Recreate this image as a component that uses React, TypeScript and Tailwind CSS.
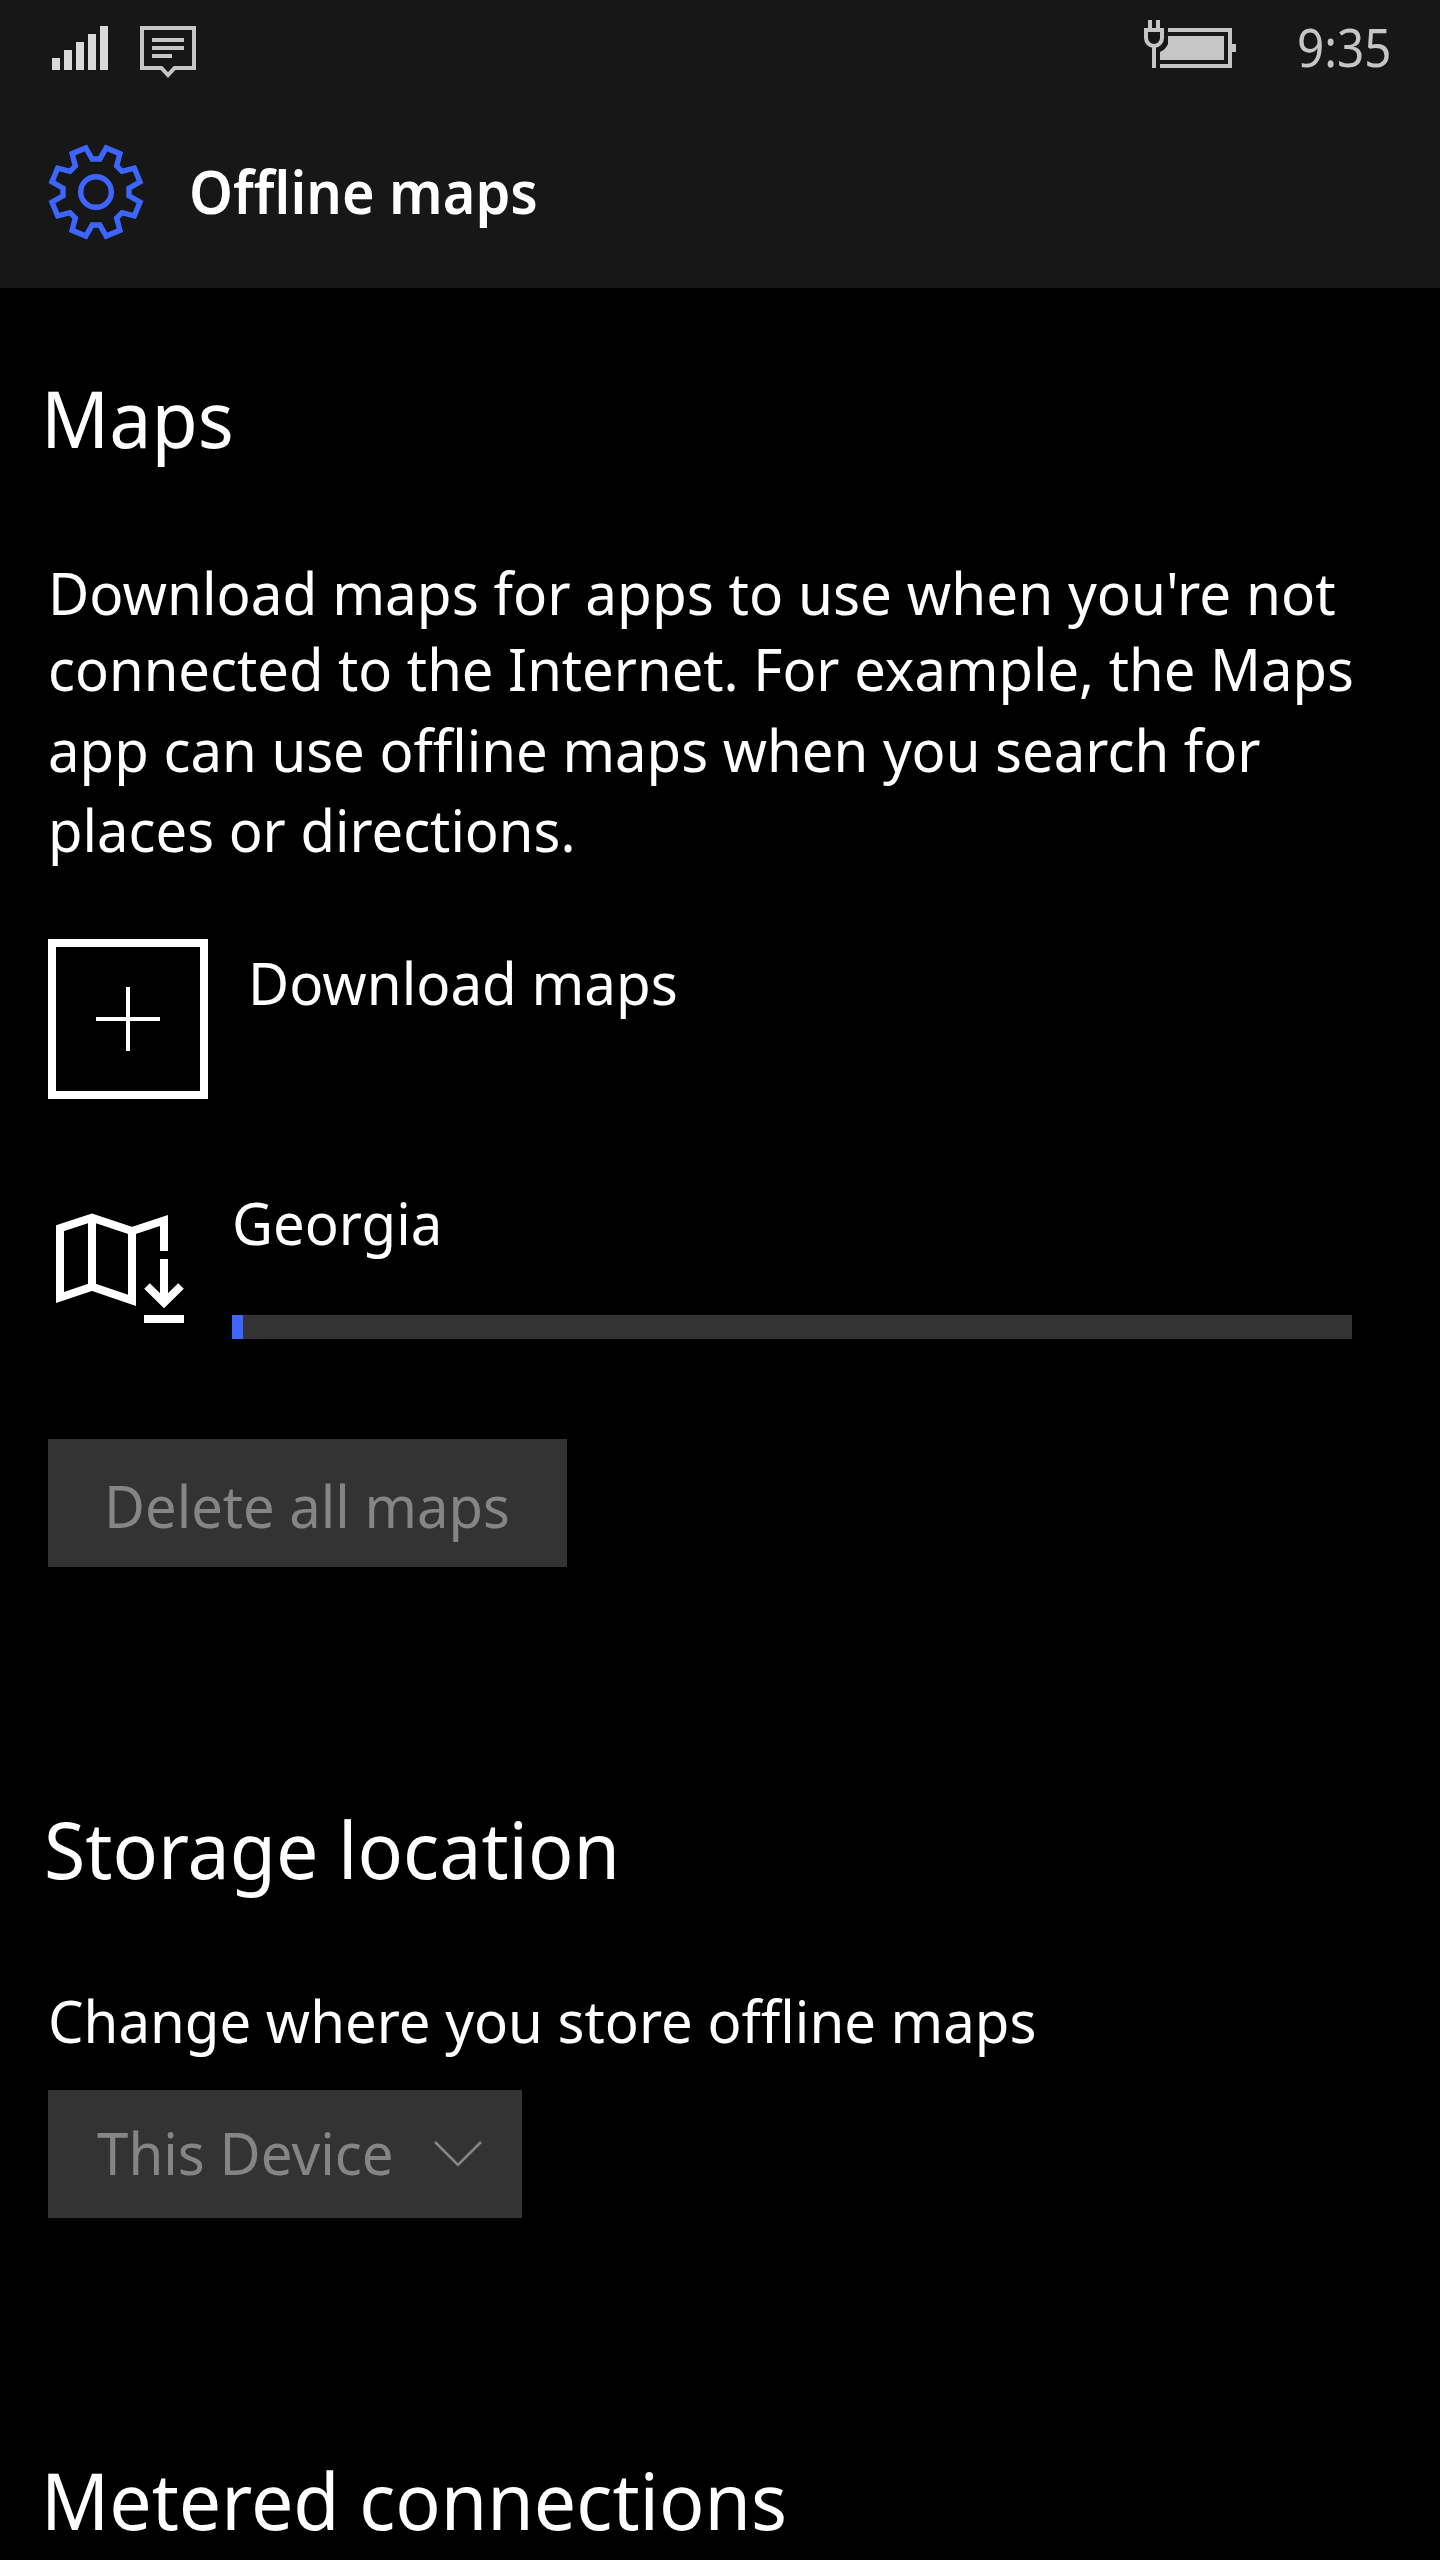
import type { ReactNode } from 'react';

function Line({
  children,
  className = '',
  scale = 'scale-x-[0.958]',
}: {
  children: ReactNode;
  className?: string;
  scale?: string;
}) {
  return (
    <div className={`w-max origin-left text-[58.8px] leading-[80px] whitespace-nowrap ${scale} ${className}`}>
      {children}
    </div>
  );
}

function Heading({ children, className = '' }: { children: ReactNode; className?: string }) {
  return (
    <h2 className={`w-max origin-left scale-x-[0.96] text-[78.4px] leading-[100px] font-normal whitespace-nowrap ${className}`}>
      {children}
    </h2>
  );
}

function SignalIcon() {
  return (
    <svg width="56" height="44" viewBox="0 0 56 44" fill="#dadada" shapeRendering="crispEdges">
      <path d="M0 32h8v12H0zM12 24h8v20h-8zM24 16h8v28h-8zM36 8h8v36h-8zM48 0h8v44h-8z" />
    </svg>
  );
}

function MessageIcon() {
  return (
    <svg className="ml-8" width="56" height="52" viewBox="0 0 56 52" fill="none" stroke="#c6c6c6" strokeWidth="4">
      <path d="M2 2H54V42H34.6L28 49L21.4 42H2Z" />
      <path d="M12 14H44M12 22H44M12 30H32" />
    </svg>
  );
}

function BatteryIcon() {
  return (
    <svg width="92" height="48" viewBox="0 0 92 48" fill="none" stroke="#c6c6c6" strokeWidth="4">
      <path d="M6 0V9M14 0V9M2 10H18V18A8 8 0 0 1 2 18ZM10 26V48" />
      <path d="M24 10H86V46H16" />
      <path d="M88 24H92V32H88ZM24 16H80V40H16V32Q22 29 24 24Z" fill="#c6c6c6" stroke="none" />
    </svg>
  );
}

const gearPoints = Array.from({ length: 8 }, (_, k) => {
  const a = (k * Math.PI) / 4;
  return [
    [-10.2, -44],
    [-3.8, -33],
    [3.8, -33],
    [10.2, -44],
  ]
    .map(([x, y]) => `${(x * Math.cos(a) - y * Math.sin(a)).toFixed(2)},${(x * Math.sin(a) + y * Math.cos(a)).toFixed(2)}`)
    .join(' ');
}).join(' ');

function GearIcon() {
  return (
    <svg width="96" height="96" viewBox="-48 -48 96 96" overflow="visible" fill="none" stroke="#3e65ff" strokeWidth="5.4">
      <polygon points={gearPoints} />
      <circle r="15.3" />
    </svg>
  );
}

function MapDownloadIcon() {
  return (
    <svg className="mt-[31px] shrink-0" width="128" height="110" viewBox="0 0 128 110" fill="none" stroke="#fff" strokeWidth="8">
      <path d="M108 38V7.5L76 18L36 4.6L4 15.2V84.5L36 73.8L76 87.4V18M36 4.6V73.8" />
      <path d="M108 46V88M91 73L108 89.7L125 73M88 106H128" />
    </svg>
  );
}

export default function App() {
  return (
    <div className="h-[2560px] w-[1440px] overflow-hidden bg-black font-['Noto_Sans','Open_Sans',sans-serif] text-white">
      <header className="h-[288px] bg-[#171717]">
        <div className="flex h-24 items-start justify-between pr-[42px] pl-[52px]">
          <div className="flex pt-[26px]">
            <SignalIcon />
            <MessageIcon />
          </div>
          <div className="flex">
            <div className="pt-5">
              <BatteryIcon />
            </div>
            <div className="mt-[7px] ml-[61px] w-[101px] origin-left scale-x-[0.915] text-[52px] leading-[80px] whitespace-nowrap text-[#c6c6c6]">
              9:35
            </div>
          </div>
        </div>
        <div className="flex pl-12">
          <div className="mt-12">
            <GearIcon />
          </div>
          <h1 className="mt-[55px] ml-[45px] w-max origin-left scale-x-[0.95] text-[58.8px] leading-[80px] font-semibold whitespace-nowrap">
            Offline maps
          </h1>
        </div>
      </header>

      <main className="px-12 pt-20">
        <section>
          <Heading className="-ml-[7px]">Maps</Heading>
          <div className="mt-[84px]">
            <Line className="h-[76px]" scale="scale-x-[0.963]">Download maps for apps to use when you're not</Line>
            <Line className="h-[81px]" scale="scale-x-[0.955]">connected to the Internet. For example, the Maps</Line>
            <Line className="h-20" scale="scale-x-[0.957]">app can use offline maps when you search for</Line>
            <Line className="h-20" scale="scale-x-[0.955]">places or directions.</Line>
          </div>

          <div className="mt-[70px] flex h-40">
            <button className="flex size-40 items-center justify-center border-8 border-white">
              <svg width="64" height="64" viewBox="0 0 64 64" stroke="#fff" strokeWidth="4">
                <path d="M0 32H64M32 0V64" />
              </svg>
            </button>
            <Line className="mt-[3px] ml-10" scale="scale-x-[0.961]">Download maps</Line>
          </div>

          <div className="mt-[83px] flex h-[157px] pl-2">
            <MapDownloadIcon />
            <div className="ml-12 flex w-[1120px] flex-col justify-between">
              <Line>Georgia</Line>
              <div className="h-6 bg-[#333333]">
                <div className="h-6 w-[11px] bg-[#3e65ff]" />
              </div>
            </div>
          </div>

          <button className="mt-[100px] block h-32 w-[519px] bg-[#333333] pl-14 text-left text-[#858585]">
            <Line className="mt-1" scale="scale-x-[0.955]">Delete all maps</Line>
          </button>
        </section>

        <section className="mt-[232px]">
          <Heading className="-ml-1">Storage location</Heading>
          <Line className="mt-[81px]">Change where you store offline maps</Line>
          <button className="mt-[30px] flex h-32 w-[474px] items-center bg-[#333333] pl-[49px] text-[#858585]">
            <div className="w-[337px]">
              <Line className="-mt-1" scale="scale-x-[0.96]">This Device</Line>
            </div>
            <svg width="48" height="26" viewBox="0 0 48 26" fill="none" stroke="currentColor" strokeWidth="2.6">
              <path d="M1 1L24 24L47 1" />
            </svg>
          </button>
        </section>

        <section className="mt-[232px]">
          <Heading className="-ml-[7px]">Metered connections</Heading>
        </section>
      </main>
    </div>
  );
}
